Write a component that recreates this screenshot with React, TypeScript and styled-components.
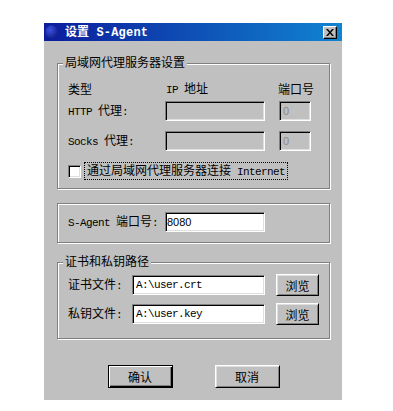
import React from 'react';
import styled, { createGlobalStyle } from 'styled-components';

const Global = createGlobalStyle`
  html, body { margin: 0; padding: 0; background: #fff; }
  body { font-family: "Noto Sans CJK SC", sans-serif; }
  * { box-sizing: border-box; }
`;

const Page = styled.div`
  padding: 23px 0 0 44px;
`;

const Window = styled.div`
  width: 298px;
  height: 377px;
  background: #c0c0c0;
  display: flex;
  flex-direction: column;
  font-family: "Noto Sans CJK SC", sans-serif;
  font-size: 12px;
  color: #000;
`;

const TitleBar = styled.div`
  height: 18px;
  display: flex;
  align-items: center;
  gap: 7px;
  padding: 0 5px 0 1px;
  background: linear-gradient(to right, #0c1c9c, #1084d0);
  color: #fff;
  font-weight: bold;
  line-height: 18px;
`;

const TitleText = styled.div`
  flex: 1;
  white-space: pre;
`;

const L = styled.span<{ $bold?: boolean }>`
  font-family: "Liberation Mono", monospace;
  font-size: ${p => (p.$bold ? '12px' : '11px')};
  letter-spacing: ${p => (p.$bold ? '0.2px' : '-0.6px')};
  font-weight: ${p => (p.$bold ? 'bold' : 'normal')};
  white-space: pre;
`;

const CloseBtn = styled.div`
  width: 14px;
  height: 13px;
  background: #c0c0c0;
  border: 1px solid;
  border-color: #fff #000 #000 #fff;
  box-shadow: inset -1px -1px 0 #808080;
  display: flex;
  align-items: center;
  justify-content: center;
`;

const Content = styled.div`
  display: flex;
  flex-direction: column;
  padding: 0 12px 0 13px;
`;

const Group = styled.div<{ $h: number; $mt: number }>`
  position: relative;
  height: ${p => p.$h}px;
  margin-top: ${p => p.$mt}px;
  border: 1px solid #808080;
  box-shadow: 1px 1px 0 #fff, inset 1px 1px 0 #fff;
`;

const Legend = styled.div`
  position: absolute;
  top: -9px;
  left: 5px;
  padding: 0 2px;
  line-height: 14px;
  background: #c0c0c0;
  white-space: nowrap;
`;

const GroupBody = styled.div<{ $pt: number }>`
  padding: ${p => p.$pt}px 0 0 10px;
  display: flex;
  flex-direction: column;
`;

const ProxyGrid = styled.div<{ $rowGap: number }>`
  display: grid;
  grid-template-columns: 83px 100px 32px;
  column-gap: 14px;
  row-gap: ${p => p.$rowGap}px;
  align-items: center;
`;

const HeaderRow = styled(ProxyGrid)`
  height: 14px;
  line-height: 14px;
  margin-bottom: 6px;
  white-space: nowrap;
`;

const Cell = styled.div<{ $shift?: number }>`
  white-space: nowrap;
  line-height: 14px;
  margin-left: ${p => p.$shift ?? 0}px;
`;

const Field = styled.input<{ $w: number; $disabled?: boolean; $sans?: boolean; $pad?: number }>`
  width: ${p => p.$w}px;
  height: 20px;
  margin: 0;
  padding: 0 0 0 ${p => p.$pad ?? 3}px;
  border: 1px solid;
  border-color: #808080 #fff #fff #808080;
  box-shadow: inset 1px 1px 0 #000, inset -1px -1px 0 #dfdfdf;
  background: ${p => (p.$disabled ? '#c0c0c0' : '#fff')};
  color: ${p => (p.$disabled ? '#8a8a8a' : '#000')};
  font-family: ${p => (p.$sans ? '"Liberation Sans", sans-serif' : '"Liberation Mono", monospace')};
  font-size: 11px;
  letter-spacing: ${p => (p.$sans ? '0' : '-0.6px')};
  outline: none;
  border-radius: 0;
`;

const CheckRow = styled.label`
  display: flex;
  align-items: center;
  gap: 3px;
  margin-top: 12px;
  height: 16px;
`;

const CheckBox = styled.span`
  width: 13px;
  height: 13px;
  background: #fff;
  border: 1px solid;
  border-color: #808080 #fff #fff #808080;
  box-shadow: inset 1px 1px 0 #000, inset -1px -1px 0 #dfdfdf;
`;

const FocusLabel = styled.span`
  border: 1px dotted #000;
  padding: 0 2px 0 2px;
  line-height: 13px;
  white-space: nowrap;
`;

const FieldRow = styled.div<{ $labelW: number }>`
  display: grid;
  grid-template-columns: ${p => p.$labelW}px auto auto;
  column-gap: 11px;
  align-items: center;
  justify-content: start;
  height: 22px;
  white-space: nowrap;
  & + & { margin-top: 7px; }
`;

const RowLabel = styled.div`
  line-height: 14px;
`;

const Button = styled.button<{ $w: number; $h: number; $default?: boolean }>`
  width: ${p => p.$w}px;
  height: ${p => p.$h}px;
  margin: 0;
  padding: 0;
  background: #c0c0c0;
  font-family: "Noto Sans CJK SC", sans-serif;
  font-size: 12px;
  color: #000;
  border-radius: 0;
  border: 1px solid;
  border-color: ${p => (p.$default ? '#000' : '#fff #000 #000 #fff')};
  box-shadow: ${p =>
    p.$default
      ? 'inset 1px 1px 0 #fff, inset -1px -1px 0 #000, inset -2px -2px 0 #808080'
      : 'inset 1px 1px 0 #dfdfdf, inset -1px -1px 0 #808080'};
  display: flex;
  align-items: center;
  justify-content: center;
`;

const ButtonBar = styled.div`
  display: flex;
  justify-content: center;
  gap: 42px;
  margin-top: 26px;
`;

const AppIcon = () => (
  <svg width="13" height="14" viewBox="0 0 13 14">
    <defs>
      <radialGradient id="ig" cx="0.4" cy="0.35" r="0.7">
        <stop offset="0" stopColor="#3a52e0" />
        <stop offset="1" stopColor="#101c8a" />
      </radialGradient>
    </defs>
    <ellipse cx="6.5" cy="7" rx="6.3" ry="6.8" fill="url(#ig)" />
  </svg>
);

const XGlyph = () => (
  <svg width="8" height="7" viewBox="0 0 8 7">
    <path d="M0 0h2l2 2.5L6 0h2L5 3.5 8 7H6L4 4.5 2 7H0l3-3.5z" fill="#000" />
  </svg>
);

export default function App() {
  return (
    <>
      <Global />
      <Page>
        <Window>
          <TitleBar>
            <AppIcon />
            <TitleText>
              设置<L $bold> S-Agent</L>
            </TitleText>
            <CloseBtn>
              <XGlyph />
            </CloseBtn>
          </TitleBar>
          <Content>
            <Group $h={126} $mt={22}>
              <Legend>局域网代理服务器设置</Legend>
              <GroupBody $pt={17}>
                <HeaderRow $rowGap={0}>
                  <Cell>类型</Cell>
                  <Cell $shift={1}>
                    <L>{'IP '}</L>地址
                  </Cell>
                  <Cell $shift={-1}>端口号</Cell>
                </HeaderRow>
                <ProxyGrid $rowGap={10}>
                  <Cell>
                    <L>{'HTTP '}</L>代理<L>:</L>
                  </Cell>
                  <Field $w={100} $disabled readOnly value="" />
                  <Field $w={32} $disabled $sans readOnly value="0" />
                  <Cell>
                    <L>{'Socks '}</L>代理<L>:</L>
                  </Cell>
                  <Field $w={100} $disabled readOnly value="" />
                  <Field $w={32} $disabled $sans readOnly value="0" />
                </ProxyGrid>
                <CheckRow>
                  <CheckBox />
                  <FocusLabel>
                    通过局域网代理服务器连接<L>{' Internet'}</L>
                  </FocusLabel>
                </CheckRow>
              </GroupBody>
            </Group>

            <Group $h={40} $mt={14}>
              <GroupBody $pt={7}>
                <FieldRow $labelW={86}>
                  <RowLabel>
                    <L>{'S-Agent '}</L>端口号<L>:</L>
                  </RowLabel>
                  <Field $w={100} $sans $pad={1} readOnly value="8080" />
                </FieldRow>
              </GroupBody>
            </Group>

            <Group $h={77} $mt={19}>
              <Legend>证书和私钥路径</Legend>
              <GroupBody $pt={11}>
                <FieldRow $labelW={53}>
                  <RowLabel>
                    证书文件<L>:</L>
                  </RowLabel>
                  <Field $w={133} readOnly value="A:\user.crt" />
                  <Button $w={43} $h={22}>浏览</Button>
                </FieldRow>
                <FieldRow $labelW={53}>
                  <RowLabel>
                    私钥文件<L>:</L>
                  </RowLabel>
                  <Field $w={133} readOnly value="A:\user.key" />
                  <Button $w={43} $h={22}>浏览</Button>
                </FieldRow>
              </GroupBody>
            </Group>

            <ButtonBar>
              <Button $w={65} $h={23} $default>确认</Button>
              <Button $w={65} $h={23}>取消</Button>
            </ButtonBar>
          </Content>
        </Window>
      </Page>
    </>
  );
}
